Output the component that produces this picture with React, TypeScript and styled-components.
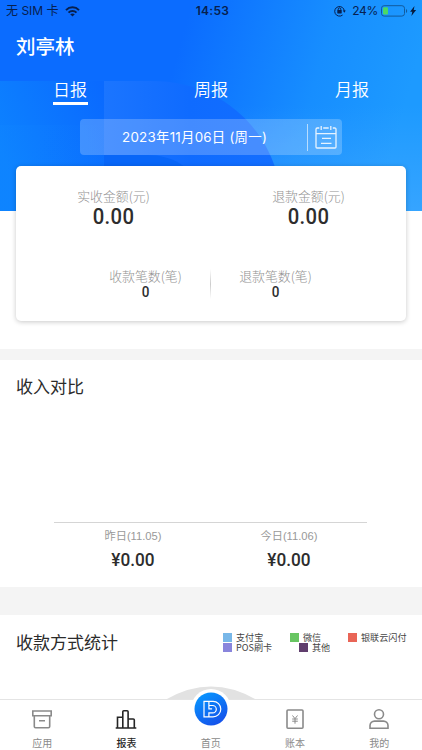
import React from 'react';
import styled, { createGlobalStyle, css } from 'styled-components';

const Global = createGlobalStyle`
  * { box-sizing: border-box; }
  body { margin: 0; background: #fff; overflow: hidden; font-family: Inter, "Noto Sans CJK SC", sans-serif; }
`;

const cjk = '"Noto Sans CJK SC", sans-serif';
const digits = 'Roboto, "Noto Sans CJK SC", sans-serif';

const Page = styled.div`
  width: 422px;
  height: 750px;
  display: flex;
  flex-direction: column;
  overflow: hidden;
  background: #fff;
`;

const Header = styled.header`
  position: relative;
  height: 211px;
  flex: none;
  color: #fff;
`;

const Backdrop = styled.svg`
  position: absolute;
  inset: 0;
`;

const HeaderContent = styled.div`
  position: relative;
`;

const StatusBar = styled.div`
  height: 22px;
  display: grid;
  grid-template-columns: 1fr auto 1fr;
  align-items: center;
  padding: 0 5px 0 6px;
  color: #07204f;
  font-size: 12px;
  line-height: 22px;
`;

const StatusGroup = styled.div<{ $end?: boolean }>`
  display: flex;
  align-items: center;
  justify-content: ${p => (p.$end ? 'flex-end' : 'flex-start')};
  gap: ${p => (p.$end ? 0 : 6)}px;
`;

const Clock = styled.span`
  font-weight: 600;
  font-size: 12px;
  letter-spacing: 0.3px;
  margin-left: 2px;
`;

const Percent = styled.span`
  margin: 0 3px 0 6px;
  letter-spacing: -0.3px;
`;

const Merchant = styled.h1`
  margin: 0;
  padding: 10px 16px 1px;
  font: 500 19.5px/27px ${cjk};
`;

const Tabs = styled.nav`
  display: grid;
  grid-template-columns: repeat(3, 141px);
  justify-content: center;
  margin-top: 17px;
`;

const Tab = styled.div<{ $active?: boolean }>`
  justify-self: center;
  height: 28px;
  padding: 0 0.5px;
  font: 350 17px/24px ${cjk};
  border-bottom: 3px solid ${p => (p.$active ? '#fff' : 'transparent')};
`;

const DateBar = styled.div`
  display: flex;
  align-items: center;
  width: 262px;
  height: 36px;
  margin: 14px 0 0 80px;
  border-radius: 4px;
  background: rgba(255, 255, 255, 0.22);
`;

const DateText = styled.span`
  width: 227px;
  padding-left: 2px;
  text-align: center;
  font: 400 13.4px/35px Inter, ${cjk};
  white-space: pre;
  letter-spacing: 0.24px;
`;

const DateRule = styled.i`
  width: 1px;
  height: 27px;
  margin-right: 7px;
  background: rgba(255, 255, 255, 0.6);
`;

const Card = styled.section`
  position: relative;
  flex: none;
  width: 390px;
  height: 155px;
  margin: -45px 0 28px 16px;
  border-radius: 5px;
  background: #fff;
  box-shadow: 0 1px 5px rgba(0, 0, 0, 0.22);
`;

const Totals = styled.div`
  display: grid;
  grid-template-columns: 195px 195px;
  padding-top: 20px;
`;

const Counts = styled.div`
  display: grid;
  grid-template-columns: 129px 1px 129px;
  margin: 39px 0 0 65px;
`;

const CountRule = styled.i`
  height: 30px;
  margin-top: 3px;
  background: linear-gradient(transparent, #ccc, transparent);
`;

const StatLabel = styled.div`
  height: 19px;
  color: #929292;
  font: 300 12.9px/20px ${cjk};
`;

const StatValue = styled.strong`
  display: block;
  font-family: ${digits};
  font-weight: 500;
  transform: scaleX(0.9);
`;

const Stat = styled.div<{ $large?: boolean }>`
  text-align: center;
  color: #2d2d2d;
  ${StatValue} {
    ${p => p.$large
      ? css`font-size: 22.5px; line-height: 22px; letter-spacing: 0.35px;`
      : css`font-size: 15px; line-height: 15px;`}
  }
`;

const Separator = styled.div<{ $height: number }>`
  flex: none;
  height: ${p => p.$height}px;
  background: #f4f4f4;
`;

const SectionTitle = styled.h2`
  flex: none;
  margin: 0;
  color: #2b2b2b;
  font: 400 17px/24px ${cjk};
`;

const Comparison = styled.section`
  flex: none;
  height: 227px;
  padding: 14px 54px 0;
  ${SectionTitle} { margin-left: -38px; }
`;

const Axis = styled.div`
  width: 313px;
  height: 125px;
  border-bottom: 1px solid #d5d5d5;
`;

const Days = styled.div`
  display: grid;
  grid-template-columns: 156px 156px;
  padding: 4px 0 0 1px;
  text-align: center;
`;

const DayLabel = styled.div`
  height: 19px;
  color: #999;
  font: 400 11.2px/19px "Liberation Sans", "Noto Sans CJK SC", sans-serif;
`;

const DayValue = styled.div`
  margin-top: 3px;
  color: #2d2d2d;
  font: 500 18.5px/22px ${digits};
  transform: scaleX(0.93);
`;

const Methods = styled.section`
  display: flex;
  flex: none;
  height: 84px;
  padding: 15px 16px 0;
`;

const Legend = styled.div`
  display: flex;
  flex-direction: column;
  margin: 2px 0 0 105px;
`;

const LegendRow = styled.div`
  display: flex;
  height: 10px;
`;

const LegendItem = styled.div<{ $color: string; $width: number }>`
  display: flex;
  flex: none;
  align-items: center;
  gap: 4px;
  width: ${p => p.$width}px;
  color: #444;
  font: 400 9.1px/10px ${cjk};
  white-space: nowrap;
  &::before {
    content: '';
    flex: none;
    width: 9px;
    height: 9px;
    background: ${p => p.$color};
  }
`;

const TabBar = styled.footer`
  position: relative;
  display: grid;
  grid-template-columns: repeat(5, 84.3px);
  flex: none;
  height: 51px;
  border-top: 1px solid #e4e4e4;
  background: #fff;
`;

const NavItem = styled.div<{ $active?: boolean }>`
  position: relative;
  display: flex;
  flex-direction: column;
  align-items: center;
  color: ${p => (p.$active ? '#252525' : '#8a8a8a')};
  font: ${p => (p.$active ? 500 : 400)} 10px/16px ${cjk};
`;

const NavIcon = styled.svg`
  width: 22px;
  height: 22px;
  margin: 8px 0 5px;
  fill: none;
  stroke: currentColor;
  stroke-width: 1.6;
`;

const HomeBadge = styled.svg`
  width: 44px;
  height: 44px;
  margin: -13px 0 4px;
`;

const Arc = styled.svg`
  position: absolute;
  left: 160px;
  top: -14px;
`;

function Wifi() {
  return (
    <svg width="15" height="11" viewBox="0 0 15 11" fill="none" stroke="currentColor" strokeWidth="2">
      <path d="M1 4.1C4.6.4 10.4.4 14 4.1M3.5 6.6c2.2-2.2 5.8-2.2 8 0" />
      <path d="M7.5 10.6 5.2 8.2c1.2-1.1 3.4-1.1 4.6 0z" fill="currentColor" stroke="none" />
    </svg>
  );
}

function RotationLock() {
  return (
    <svg width="12" height="12" viewBox="0 0 12 12" fill="none" stroke="currentColor">
      <path d="M8.6 10A4.8 4.8 0 1 1 10.3 6" />
      <path d="M8.8 5.5h3L10.3 7.8z" fill="currentColor" stroke="none" />
      <rect x="3.3" y="5.1" width="4.4" height="3.4" rx=".4" fill="currentColor" stroke="none" />
      <path d="M4.2 5.3V4.2a1.3 1.3 0 0 1 2.6 0v1.1" />
    </svg>
  );
}

function Battery() {
  return (
    <svg width="36" height="12" viewBox="0 0 36 12">
      <rect x=".5" y=".7" width="23" height="10.4" rx="2.6" fill="none" stroke="#125b9d" />
      <rect x="2" y="2.2" width="5" height="7.4" rx="1" fill="#4bd964" />
      <path d="M25 4q1.2.3 1.2 2T25 8z" fill="#125b9d" />
      <path d="m33.5 1-4.4 5.8h2.2L30.4 11l4.7-6h-2.4z" fill="#061b3e" />
    </svg>
  );
}

function Calendar() {
  return (
    <svg width="22" height="24" viewBox="0 0 22 24" fill="none" stroke="#e7f3ff" strokeWidth="1.3">
      <path d="M4.3 3H2.2A1.2 1.2 0 0 0 1 4.2V22a1 1 0 0 0 1 1h18a1 1 0 0 0 1-1V4.2A1.2 1.2 0 0 0 19.8 3h-2M8.2 3h5.5M1 8.7h20M6.2 1v4M15.8 1v4M7 13.3h9M6 18.3h10.5" />
    </svg>
  );
}

function HeaderBackdrop() {
  return (
    <Backdrop width="422" height="211" viewBox="0 0 422 211">
      <defs>
        <linearGradient id="base" gradientUnits="userSpaceOnUse" x1="175" y1="62" x2="400" y2="125">
          <stop offset="0" stopColor="#0b6cff" />
          <stop offset=".6" stopColor="#178eff" />
          <stop offset="1" stopColor="#1d9aff" />
        </linearGradient>
        <linearGradient id="edge" gradientUnits="userSpaceOnUse" x1="0" y1="150" x2="110" y2="105">
          <stop stopColor="#0d82ff" />
          <stop offset="1" stopColor="#0a6aff" />
        </linearGradient>
        <linearGradient id="letter" x1="0" y1="0" x2="1" y2="0">
          <stop stopColor="#1b75ff" />
          <stop offset=".5" stopColor="#0f6bff" />
          <stop offset="1" stopColor="#136eff" />
        </linearGradient>
        <linearGradient id="glow" x1="0" y1="0" x2="0" y2="1">
          <stop offset=".5" stopColor="#6abaff" stopOpacity="0" />
          <stop offset="1" stopColor="#6abaff" stopOpacity=".32" />
        </linearGradient>
        <linearGradient id="lowerEdge" gradientUnits="userSpaceOnUse" x1="0" y1="0" x2="110" y2="0">
          <stop stopColor="#1690ff" stopOpacity=".55" />
          <stop offset="1" stopColor="#1690ff" stopOpacity="0" />
        </linearGradient>
      </defs>
      <path d="M0 0h422v211H0z" fill="url(#base)" />
      <path d="M200 0h222v211H200z" fill="url(#glow)" />
      <path d="M0 81h104v130H0z" fill="url(#edge)" />
      <path d="M0 125h104v86H0z" fill="url(#lowerEdge)" opacity=".25" />
      <path d="M104 81h48c58 0 105 34 123 86v44H104z" fill="url(#letter)" />
      <path d="M104 155h42c15 0 27 3 39 12v44h-81z" fill="#0866f8" />
    </Backdrop>
  );
}

export default function App() {
  return (
    <Page>
      <Global />
      <Header>
        <HeaderBackdrop />
        <HeaderContent>
          <StatusBar>
            <StatusGroup><span>无 SIM 卡</span><Wifi /></StatusGroup>
            <Clock>14:53</Clock>
            <StatusGroup $end><RotationLock /><Percent>24%</Percent><Battery /></StatusGroup>
          </StatusBar>
          <Merchant>刘亭林</Merchant>
          <Tabs><Tab $active>日报</Tab><Tab>周报</Tab><Tab>月报</Tab></Tabs>
          <DateBar><DateText>2023年11月06日 (周一)</DateText><DateRule /><Calendar /></DateBar>
        </HeaderContent>
      </Header>

      <Card>
        <Totals>
          <Stat $large><StatLabel>实收金额(元)</StatLabel><StatValue>0.00</StatValue></Stat>
          <Stat $large><StatLabel>退款金额(元)</StatLabel><StatValue>0.00</StatValue></Stat>
        </Totals>
        <Counts>
          <Stat><StatLabel>收款笔数(笔)</StatLabel><StatValue>0</StatValue></Stat>
          <CountRule />
          <Stat><StatLabel>退款笔数(笔)</StatLabel><StatValue>0</StatValue></Stat>
        </Counts>
      </Card>
      <Separator $height={11} />

      <Comparison>
        <SectionTitle>收入对比</SectionTitle>
        <Axis />
        <Days>
          <div><DayLabel>昨日(11.05)</DayLabel><DayValue>¥0.00</DayValue></div>
          <div><DayLabel>今日(11.06)</DayLabel><DayValue>¥0.00</DayValue></div>
        </Days>
      </Comparison>
      <Separator $height={28} />

      <Methods>
        <SectionTitle>收款方式统计</SectionTitle>
        <Legend>
          <LegendRow>
            <LegendItem $color="#78b7e8" $width={67}>支付宝</LegendItem>
            <LegendItem $color="#68c562" $width={58}>微信</LegendItem>
            <LegendItem $color="#e96557" $width={60}>银联云闪付</LegendItem>
          </LegendRow>
          <LegendRow>
            <LegendItem $color="#8985dc" $width={76}>POS刷卡</LegendItem>
            <LegendItem $color="#603e6d" $width={40}>其他</LegendItem>
          </LegendRow>
        </Legend>
      </Methods>

      <TabBar>
        <Arc width="102" height="13" viewBox="0 0 102 13"><path d="M7 13Q51-12 95 13z" fill="#e2e2e2" /></Arc>
        <NavItem>
          <NavIcon viewBox="0 0 22 22"><path d="M1.8 3h18.4v4.8H1.8zM3.3 8v10.5a1.2 1.2 0 0 0 1.2 1.2h13a1.2 1.2 0 0 0 1.2-1.2V8M8 12.7h6" /></NavIcon>
          应用
        </NavItem>
        <NavItem $active>
          <NavIcon viewBox="0 0 22 22"><path d="M.7 20h20.6M2.5 20V9.3h5.3V20M7.8 20V3.7A1 1 0 0 1 8.8 2.7h3.3a1 1 0 0 1 1 1V20M13.1 11h5.2a1 1 0 0 1 1 1v8" /></NavIcon>
          报表
        </NavItem>
        <NavItem>
          <HomeBadge viewBox="0 0 44 44">
            <defs><linearGradient id="badge" x1=".2" y1="0" x2=".8" y2="1"><stop stopColor="#0797ff" /><stop offset="1" stopColor="#164de9" /></linearGradient></defs>
            <circle cx="22" cy="22" r="20" fill="#fff" />
            <circle cx="22" cy="22" r="16.5" fill="url(#badge)" />
            <path d="M15 14.3h9a7.8 7.8 0 0 1 0 15.6h-9zM19.9 14.3v4.2h3.7a3.7 3.7 0 0 1 0 7.4h-3.7v4M19.9 18.5v3.4h3.2" fill="none" stroke="#fff" strokeWidth="1.2" />
          </HomeBadge>
          首页
        </NavItem>
        <NavItem>
          <NavIcon viewBox="0 0 22 22"><rect x="3" y="2" width="16" height="18.3" rx="1" /><path d="m8.5 7.5 2.5 3.2 2.5-3.2M8.2 11h5.6M8.2 13.2h5.6M11 10.7v5" strokeWidth="1" /></NavIcon>
          账本
        </NavItem>
        <NavItem>
          <NavIcon viewBox="0 0 22 22"><circle cx="11" cy="6.2" r="4.5" /><path d="M2 20.2v-2.7a4.5 4.5 0 0 1 4.5-4.4h9a4.5 4.5 0 0 1 4.5 4.4v2.7z" /></NavIcon>
          我的
        </NavItem>
      </TabBar>
    </Page>
  );
}
